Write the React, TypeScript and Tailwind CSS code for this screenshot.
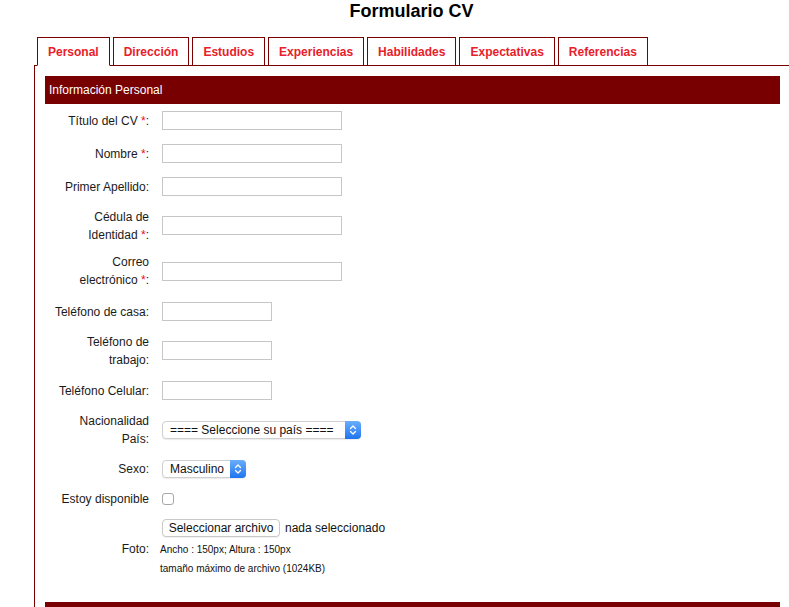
import React from "react";

const LBL =
  "w-[104px] shrink-0 text-right text-[12px] leading-[18px] text-[#1a1a1a] whitespace-nowrap";

function Req() {
  return <span className="text-[#e8102a]">*</span>;
}

function Row({
  h,
  label,
  children,
}: {
  h: string;
  label: React.ReactNode;
  children?: React.ReactNode;
}) {
  return (
    <div className={`flex items-center ${h}`}>
      <div className={LBL}>{label}</div>
      <div className="ml-[13px] flex items-center">{children}</div>
    </div>
  );
}

function TextInput({ w }: { w: string }) {
  return (
    <input
      type="text"
      className={`h-[19px] ${w} border border-[#c6c6c6] bg-white outline-none`}
    />
  );
}

function FakeSelect({ w, text }: { w: string; text: string }) {
  return (
    <div
      className={`flex h-[18px] ${w} items-stretch rounded-[4px] border border-[#cfcfcf] bg-white shadow-[0_1px_1px_rgba(0,0,0,0.08)]`}
    >
      <div className="flex-1 pl-[7px] text-[12px] leading-[16px] text-[#111] whitespace-nowrap overflow-hidden">
        {text}
      </div>
      <div className="-my-px -mr-px flex w-[16px] items-center justify-center rounded-r-[4px] bg-linear-to-b from-[#69aefb] to-[#1b74ef]">
        <svg width="10" height="14" viewBox="0 0 10 14" fill="none">
          <path
            d="M2.5 5.5 L5 3 L7.5 5.5"
            stroke="white"
            strokeWidth="1.3"
            strokeLinecap="round"
            strokeLinejoin="round"
          />
          <path
            d="M2.5 8.5 L5 11 L7.5 8.5"
            stroke="white"
            strokeWidth="1.3"
            strokeLinecap="round"
            strokeLinejoin="round"
          />
        </svg>
      </div>
    </div>
  );
}

const tabs = [
  "Personal",
  "Dirección",
  "Estudios",
  "Experiencias",
  "Habilidades",
  "Expectativas",
  "Referencias",
];

export default function App() {
  return (
    <div className="min-h-[607px] overflow-hidden bg-white pl-[34px] font-['Liberation_Sans',Arial,sans-serif] text-[#1a1a1a]">
      <div className="h-[37px] pt-[1px] text-center text-[18px] font-bold leading-[21px] text-black">
        Formulario CV
      </div>
      <div className="flex h-[29px] gap-[3px] border-b border-[#7a0000] pl-[3px]">
        {tabs.map((t, i) => (
          <div
            key={t}
            className={`-mb-px flex h-[29px] items-center border border-[#7a0000] bg-white px-[10px] text-[12px] font-bold text-[#e8202a] ${
              i === 0 ? "border-b-white" : ""
            }`}
          >
            {t}
          </div>
        ))}
      </div>
      <div className="border-l border-[#7a0000] pl-[10px] pr-[9px] pt-[10px]">
        <div className="flex h-[28px] items-center bg-[#780000] pl-[4px] text-[12px] text-white">
          Información Personal
        </div>
        <div className="flex flex-col">
          <Row
            h="h-[33px]"
            label={
              <>
                Título del CV <Req />:
              </>
            }
          >
            <TextInput w="w-[180px]" />
          </Row>
          <Row
            h="h-[33px]"
            label={
              <>
                Nombre <Req />:
              </>
            }
          >
            <TextInput w="w-[180px]" />
          </Row>
          <Row h="h-[33px]" label="Primer Apellido:">
            <TextInput w="w-[180px]" />
          </Row>
          <Row
            h="h-[45px]"
            label={
              <>
                Cédula de
                <br />
                Identidad <Req />:
              </>
            }
          >
            <TextInput w="w-[180px]" />
          </Row>
          <Row
            h="h-[46px]"
            label={
              <>
                Correo
                <br />
                electrónico <Req />:
              </>
            }
          >
            <TextInput w="w-[180px]" />
          </Row>
          <Row h="h-[35px]" label="Teléfono de casa:">
            <TextInput w="w-[110px]" />
          </Row>
          <Row
            h="h-[43px]"
            label={
              <>
                Teléfono de
                <br />
                trabajo:
              </>
            }
          >
            <TextInput w="w-[110px]" />
          </Row>
          <Row h="h-[37px]" label="Teléfono Celular:">
            <TextInput w="w-[110px]" />
          </Row>
          <Row
            h="h-[42px]"
            label={
              <>
                Nacionalidad
                <br />
                País:
              </>
            }
          >
            <FakeSelect w="w-[199px]" text="==== Seleccione su país ====" />
          </Row>
          <Row h="h-[36px]" label="Sexo:">
            <FakeSelect w="w-[84px]" text="Masculino" />
          </Row>
          <Row h="h-[24px]" label="Estoy disponible">
            <div className="h-[12px] w-[12px] rounded-[3px] border border-[#a8a8a8] bg-white" />
          </Row>
          <div className="flex items-center pt-[8px]">
            <div className={LBL}>Foto:</div>
            <div className="ml-[13px] flex flex-col">
              <div className="flex items-center">
                <div className="flex h-[18px] w-[118px] items-center justify-center rounded-[4px] border border-[#c8c8c8] bg-white text-[12px] text-[#111] shadow-[0_1px_1px_rgba(0,0,0,0.06)]">
                  Seleccionar archivo
                </div>
                <span className="ml-[5px] text-[12px] text-[#111]">
                  nada seleccionado
                </span>
              </div>
              <div className="mt-[3px] text-[10px] leading-[19px] text-[#111] -ml-[2px]">
                <div>Ancho : 150px; Altura : 150px</div>
                <div>tamaño máximo de archivo (1024KB)</div>
              </div>
            </div>
          </div>
        </div>
        <div className="mt-[24px] h-[28px] bg-[#780000]" />
      </div>
    </div>
  );
}
